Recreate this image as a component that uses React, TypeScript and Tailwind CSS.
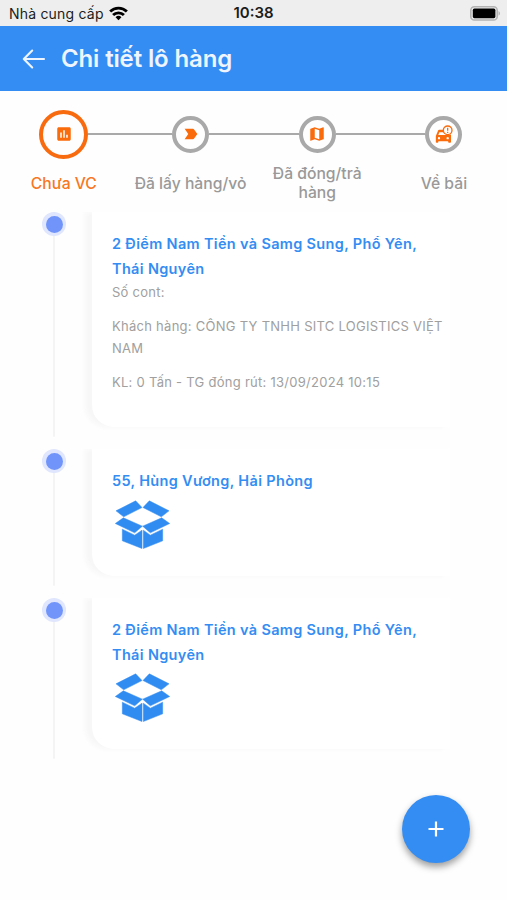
import type { ComponentType } from 'react'
import { MdAssessment, MdLabelImportant } from 'react-icons/md'

type IconProps = { className?: string }

type Step = { label: string; icon: ComponentType<IconProps>; active?: boolean }

type Stop = {
  title: string
  details?: string[]
  height: string
}

const steps: Step[] = [
  { label: 'Chưa VC', icon: MdAssessment, active: true },
  { label: 'Đã lấy hàng/vỏ', icon: MdLabelImportant },
  { label: 'Đã đóng/trả hàng', icon: MapIcon },
  { label: 'Về bãi', icon: CarAlertIcon },
]

const stops: Stop[] = [
  {
    title: '2 Điểm Nam Tiền và Samg Sung, Phổ Yên, Thái Nguyên',
    details: [
      'Số cont:',
      'Khách hàng: CÔNG TY TNHH SITC LOGISTICS VIỆT NAM',
      'KL: 0 Tấn - TG đóng rút: 13/09/2024 10:15',
    ],
    height: 'h-[237px]',
  },
  { title: '55, Hùng Vương, Hải Phòng', height: 'h-[149px]' },
  { title: '2 Điểm Nam Tiền và Samg Sung, Phổ Yên, Thái Nguyên', height: 'h-[173px]' },
]

function MapIcon({ className }: IconProps) {
  return (
    <svg viewBox="0 0 24 24" className={className} fill="currentColor">
      <path d="m20.5 3-.16.03L15 5.1 9 3 3.36 4.9a.5.5 0 0 0-.36.48V20.5c0 .28.22.5.5.5l.16-.03L9 18.9l6 2.1 5.64-1.9a.5.5 0 0 0 .36-.48V3.5a.5.5 0 0 0-.5-.5zM15 19l-6-2.11V5l6 2.11V19z" />
    </svg>
  )
}

function CarAlertIcon({ className }: IconProps) {
  return (
    <svg viewBox="0 0 54 54" className={className}>
      <path
        fill="currentColor"
        fillRule="evenodd"
        d="M9 17c.6-2 2-3 4-3h16v8H13l-3 8h32c3 0 5-1 6-2v23c0 1.5-1 2.5-2.5 2.5H42c-1.5 0-2.5-1-2.5-2.5v-2H10v2c0 1.5-1 2.5-2.5 2.5H5c-1.5 0-2.5-1-2.5-2.5V33zM12 36a3.5 3.5 0 1 0 0 7 3.5 3.5 0 0 0 0-7zm26 0a3.5 3.5 0 1 0 0 7 3.5 3.5 0 0 0 0-7z"
      />
      <circle cx="38" cy="16" r="13" fill="#fff" stroke="currentColor" strokeWidth="4" />
      <path d="M38 8v9M38 20v4" stroke="currentColor" strokeWidth="4" />
    </svg>
  )
}

function StatusBar() {
  return (
    <div className="grid h-[26px] grid-cols-3 items-center bg-[#eeeeee] pr-[6px] pl-[9px] text-[14px] text-[#1c1c1c]">
      <div className="flex items-center gap-[5px] whitespace-nowrap">
        <span className="tracking-[0.2px]">Nhà cung cấp</span>
        <svg viewBox="0 0 20 15" className="h-[15px] w-[19px]" fill="none" stroke="#000" strokeWidth="3">
          <path d="M1.2 5.4a12.6 12.6 0 0 1 17.6 0" />
          <path d="M4.3 9.2a8 8 0 0 1 11.4 0" />
          <path d="M10 14.6 6.9 11.5a4.4 4.4 0 0 1 6.2 0z" fill="#000" stroke="none" />
        </svg>
      </div>
      <span className="pt-px pr-[3px] text-center text-[15px] font-semibold">10:38</span>
      <svg viewBox="0 0 31 15" className="h-[15px] w-[31px] justify-self-end">
        <rect x="0.8" y="0.8" width="26.4" height="13.2" rx="3.6" fill="#eee" stroke="#b3b3b3" strokeWidth="1.6" />
        <rect x="2.8" y="2.6" width="22.6" height="9.6" rx="1.6" fill="#000" />
        <path d="M28.6 5c1.6.8 1.6 4 0 4.8z" fill="#a5a5a5" />
      </svg>
    </div>
  )
}

function Header() {
  return (
    <header className="flex h-[65px] items-center bg-[#348df3] pl-[22px] text-[#eef5ff]">
      <svg viewBox="0 0 24 20" className="h-5 w-6" fill="none" stroke="currentColor" strokeWidth="2.1" strokeLinecap="round" strokeLinejoin="round">
        <path d="M22 10H2M10.2 1.6 1.8 10l8.4 8.4" />
      </svg>
      <h1 className="ml-[15px] text-[24px] font-semibold tracking-[-0.14px]">Chi tiết lô hàng</h1>
    </header>
  )
}

function Stepper() {
  return (
    <div className="flex h-[120px] pt-[18px] pl-[0.5px]">
      {steps.map((step, i) => {
        const Icon = step.icon
        return (
          <div key={step.label} className="flex w-[126.7px] flex-none flex-col items-center">
            <div className="flex h-[50px] w-full items-center">
              <div className={`h-[2.5px] flex-1 ${i > 0 ? 'bg-[#a9a9a9]' : ''}`} />
              <div
                className={`flex flex-none items-center justify-center rounded-full ${
                  step.active ? 'size-[49px] border-4 border-[#f86b0e]' : 'size-[37px] border-4 border-[#a9a9a9]'
                }`}
              >
                <Icon className="size-[18px] text-[#fa6b0c]" />
              </div>
              <div className={`h-[2.5px] flex-1 ${i < steps.length - 1 ? 'bg-[#a9a9a9]' : ''}`} />
            </div>
            <div className="flex h-[48px] items-center justify-center px-1">
              <span
                className={`text-center text-[15.7px] leading-[19px] font-medium ${
                  step.active ? 'text-[#f8771f]' : 'text-[#999999]'
                }`}
              >
                {step.label}
              </span>
            </div>
          </div>
        )
      })}
    </div>
  )
}

function BoxIcon() {
  return (
    <svg viewBox="0 0 165 146" className="h-[49px] w-[55px]" fill="#318cf2" stroke="#318cf2" strokeWidth="1.5" strokeLinejoin="round">
      <path d="M62 2 81 22 26 50 3 32z" />
      <path d="M103 2 162 32 139 50 84 22z" />
      <path d="M25 53 82 78 59 98 1 70z" />
      <path d="M140 53 164 70 106 98 83 78z" />
      <path d="M22 87 59 105 81 90V145L22 122z" />
      <path d="M85 90 106 105 143 87V122L85 145z" />
    </svg>
  )
}

function TimelineItem({ stop }: { stop: Stop }) {
  return (
    <div className={`flex ${stop.height}`}>
      <div className="flex w-[24px] flex-none flex-col items-center">
        <div className="flex size-[24px] flex-none items-center justify-center rounded-full bg-[#dfe6fd]">
          <div className="size-[17px] rounded-full bg-[#7094fa]" />
        </div>
        <div className="mb-[12px] w-[2.5px] flex-1 rounded-b bg-[#f4f4f5]" />
      </div>
      <div className="ml-[14px] w-[370px] overflow-hidden pl-[12px]">
        <div
          className={`rounded-bl-[22px] bg-white pt-[20px] pl-[20px] shadow-[-7px_0_5px_#f7f7f7] ${
            stop.details ? 'h-[215px]' : stop.title.startsWith('55') ? 'h-[127px]' : 'h-[151px]'
          }`}
        >
          <h2 className="w-[320px] text-[14.5px] leading-[24.5px] font-semibold tracking-[0.33px] text-[#348df3]">
            {stop.title}
          </h2>
          {stop.details ? (
            <div className="flex w-[336px] flex-col gap-[12px] text-[13px] leading-[22px] tracking-[0.27px] text-[#a0a0a0]">
              {stop.details.map((line) => (
                <p key={line}>{line}</p>
              ))}
            </div>
          ) : (
            <div className="pt-[6px] pl-[3px]">
              <BoxIcon />
            </div>
          )}
        </div>
      </div>
    </div>
  )
}

export default function App() {
  return (
    <div className="relative h-[900px] w-[507px] overflow-hidden bg-[#fefefe] font-['Inter',sans-serif]">
      <StatusBar />
      <Header />
      <Stepper />
      <main className="pt-px pl-[42px]">
        {stops.map((stop, i) => (
          <TimelineItem key={i} stop={stop} />
        ))}
      </main>
      <button
        aria-label="Thêm"
        className="absolute right-[37px] bottom-[37px] flex size-[68px] items-center justify-center rounded-full bg-[#348df3] shadow-[0_4px_7px_rgba(0,0,0,0.38)]"
      >
        <svg viewBox="0 0 16 16" className="size-4" stroke="#fff" strokeWidth="2.2">
          <path d="M8 .5v15M.5 8h15" />
        </svg>
      </button>
    </div>
  )
}
